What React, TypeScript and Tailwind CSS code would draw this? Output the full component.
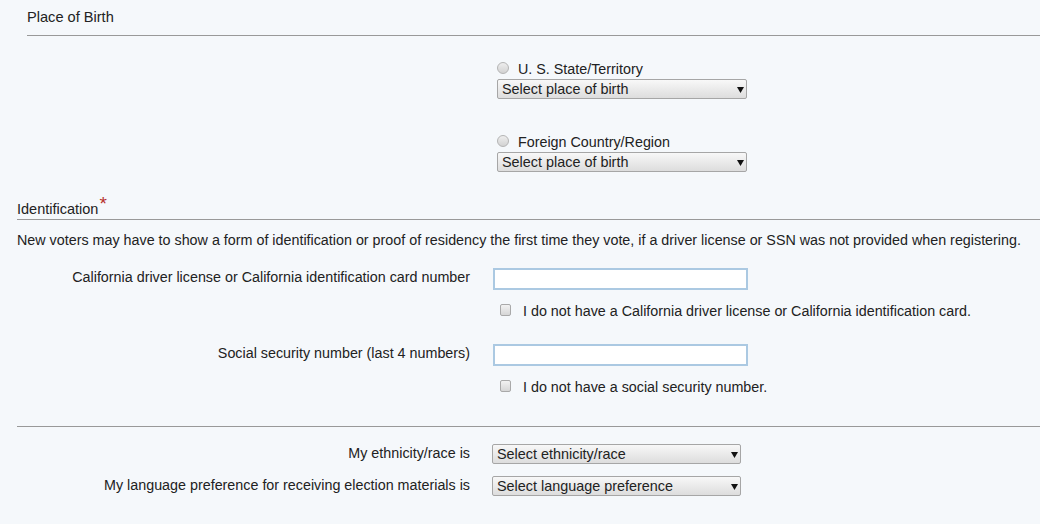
import React from "react";

function Arrow() {
  return (
    <svg width="7" height="7" viewBox="0 0 7 7" className="shrink-0">
      <polygon points="0,1 7,1 3.5,7" fill="#111" />
    </svg>
  );
}

function FakeSelect({ text, className }: { text: string; className: string }) {
  return (
    <div
      className={
        "flex h-[20px] items-center justify-between rounded-[2px] border border-[#a6a6a6] bg-gradient-to-b from-[#f8f8f8] to-[#dddddd] pl-[4px] pr-[2px] text-[14.4px] leading-[18px] " +
        className
      }
    >
      <span>{text}</span>
      <Arrow />
    </div>
  );
}

function Radio({ label }: { label: string }) {
  return (
    <div className="flex h-[17px] items-center">
      <span className="mr-[9px] mt-[-3px] inline-block h-[12px] w-[12px] rounded-full border border-[#b4b4b4] bg-gradient-to-b from-[#eeeeee] to-[#d2d2d2]" />
      <span>{label}</span>
    </div>
  );
}

function Checkbox({ label }: { label: string }) {
  return (
    <div className="flex h-[17px] items-center pl-[7px]">
      <span className="mr-[12px] mt-[-3px] inline-block h-[12px] w-[11px] rounded-[2px] border border-[#a9a9a9] bg-gradient-to-b from-[#f2f2f2] to-[#d6d6d6]" />
      <span>{label}</span>
    </div>
  );
}

function TextBox() {
  return <div className="h-[22px] w-[255px] border-2 border-[#abc9e2] bg-white" />;
}

export default function App() {
  return (
    <div className="h-[524px] w-full overflow-hidden bg-[#f5f8fb] font-['Liberation_Sans',Arial,sans-serif] text-[14.32px] leading-[17px] text-[#222]">
      <section className="pl-[27px] pt-[9px]">
        <h2 className="text-[14.6px] font-normal">Place of Birth</h2>
        <div className="mt-[9px] border-t border-[#999]" />
      </section>

      <div className="pl-[497px] pt-[25px]">
        <Radio label="U. S. State/Territory" />
        <FakeSelect text="Select place of birth" className="mt-[1px] w-[250px]" />
        <div className="mt-[35px]">
          <Radio label="Foreign Country/Region" />
        </div>
        <FakeSelect text="Select place of birth" className="mt-[1px] w-[250px]" />
      </div>

      <section className="pl-[17px] pt-[29px]">
        <h2 className="relative text-[14.5px] font-normal">
          Identification
          <span className="absolute ml-[1px] top-[-7px] text-[19px] leading-[19px] text-[#b5312c]">*</span>
        </h2>
        <div className="mt-[1px] border-t border-[#999]" />
        <p className="mt-[12px]">
          New voters may have to show a form of identification or proof of residency the first time they vote, if a driver license or SSN was not provided when registering.
        </p>
      </section>

      <div className="mt-[19px] grid grid-cols-[470px_1fr] gap-x-[23px]">
        <div className="pt-[1px] text-right">California driver license or California identification card number</div>
        <div>
          <TextBox />
          <div className="mt-[13px]">
            <Checkbox label="I do not have a California driver license or California identification card." />
          </div>
        </div>
      </div>

      <div className="mt-[24px] grid grid-cols-[470px_1fr] gap-x-[23px]">
        <div className="pt-[1px] text-right">Social security number (last 4 numbers)</div>
        <div>
          <TextBox />
          <div className="mt-[13px]">
            <Checkbox label="I do not have a social security number." />
          </div>
        </div>
      </div>

      <div className="ml-[17px] mt-[30px] border-t border-[#999]" />

      <div className="mt-[17px] grid grid-cols-[470px_1fr] gap-x-[22px] gap-y-[12px]">
        <div className="pt-[1px] text-right">My ethnicity/race is</div>
        <FakeSelect text="Select ethnicity/race" className="w-[249px]" />
        <div className="pt-[1px] text-right">My language preference for receiving election materials is</div>
        <FakeSelect text="Select language preference" className="w-[249px]" />
      </div>
    </div>
  );
}
